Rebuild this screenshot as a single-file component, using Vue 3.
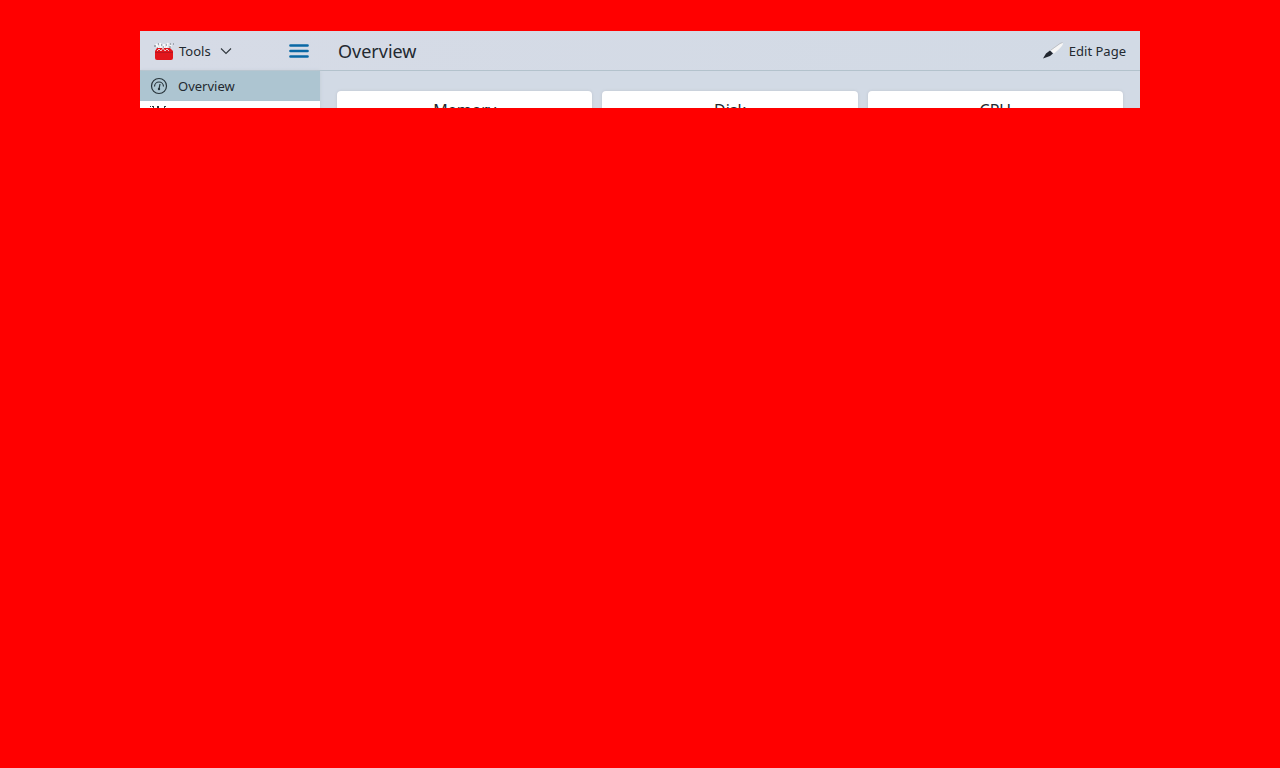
<script setup>
const cards = ['Memory', 'Disk', 'CPU']
</script>

<template>
  <div class="desktop">
    <div class="window">
      <header class="toolbar">
        <div class="side-tools">
          <button class="tool" type="button">
            <svg class="toolbox" width="20" height="20" viewBox="0 0 20 20" aria-hidden="true">
              <path d="M2 3l3 5M6 2l1 6M10 3v5M14 2l-2 6M17 4l-2 4" stroke="#f7f8f9" stroke-width="2" />
              <path d="M0 5h2M4 3h1M7 4h1M12 4h1M16 3h1M15 6h2M19 3h1M3 7h1M9 6h1" stroke="#6b7078" stroke-width="1" />
              <path d="M1 10l2-3h13l3 3v7q0 2-2 2H3q-2 0-2-2z" fill="#e2161c" />
              <path d="M1 11.500h18" stroke="#bd1620" />
              <path d="M3 10l2-2 2 2 2-3 2 3 2-2 2 2" fill="none" stroke="#eccbd0" stroke-width="1" />
            </svg>
            <span>Tools</span>
            <svg class="chevron" width="12" height="12" viewBox="0 0 12 12" aria-hidden="true">
              <path d="M1 3.500L6 8.500L11 3.500" fill="none" stroke="#30373d" stroke-width="1.100" />
            </svg>
          </button>
          <button class="menu" type="button" aria-label="Menu">
            <svg width="20" height="16" viewBox="0 0 20 16" aria-hidden="true">
              <path d="M1.500 2.500h17M1.500 8h17M1.500 13.500h17" stroke="#0968a5" stroke-width="2.700" stroke-linecap="round" />
            </svg>
          </button>
        </div>
        <h1>Overview</h1>
        <button class="tool edit" type="button">
          <svg width="22" height="20" viewBox="0 0 22 20" aria-hidden="true">
            <path d="M8.500 9.500L18 3Q21 1 21 3Q20 6 12 12.500z" fill="#f6f6f6" />
            <path d="M9 9L18 2.500L20.500 1.500" fill="none" stroke="#b3b3b6" stroke-width="0.700" />
            <path d="M1 17.500L4 12.500L8 9.500L11 12.500L8 15z" fill="#20252e" />
          </svg>
          <span>Edit Page</span>
        </button>
      </header>
      <div class="body">
        <nav class="sidebar">
          <a class="item active" href="#overview">
            <svg width="18" height="18" viewBox="0 0 18 18" fill="none" stroke="#28343b" aria-hidden="true">
              <circle cx="9" cy="9" r="7.500" stroke-width="1.200" />
              <path d="M4.500 9.500A4.500 4.500 0 0 1 13.500 9.500" stroke-width="1.200" />
              <path d="M10 7L9 12" stroke-width="1.200" />
              <circle cx="9" cy="12" r="1.200" fill="#28343b" stroke="none" />
            </svg>
            <span>Overview</span>
          </a>
          <a class="item" href="#applications" aria-label="Next page">
            <svg width="18" height="22" viewBox="0 0 18 22" fill="none" stroke="#30373d" aria-hidden="true">
              <path d="M0 1.500h1M2 1.500h2M7 1.500h2M14 1.500h2" />
              <path d="M3.500 2v16M6.500 3v14M9.500 3v14M14.500 2v16M17.500 3v14" />
              <path d="M8 2v1" stroke-width="2" />
            </svg>
          </a>
        </nav>
        <main>
          <section v-for="title in cards" :key="title" class="card">
            <h2>{{ title }}</h2>
          </section>
        </main>
      </div>
    </div>
  </div>
</template>

<style>
body {
  background: #ff0000;
}
</style>

<style scoped>
.desktop {
  padding: 31px 140px;
  font-family: "Noto Sans", sans-serif;
  font-size: 13px;
  color: #232930;
}
.window {
  max-height: 77px;
  overflow: hidden;
  background: #d2dae5;
}
.toolbar {
  display: flex;
  align-items: center;
  height: 39px;
  border-bottom: 1px solid #b3c2cc;
  background: linear-gradient(90deg, #d6dbe6, #d2dae5);
}
.side-tools {
  box-sizing: border-box;
  display: flex;
  justify-content: space-between;
  align-items: center;
  width: 180px;
  padding: 0 11px 0 14px;
}
button {
  display: flex;
  align-items: center;
  padding: 0;
  border: 0;
  background: none;
  color: inherit;
  font: inherit;
}
.tool {
  gap: 5px;
  line-height: 20px;
}
.chevron {
  margin-left: 4px;
}
h1 {
  flex: 1;
  margin: 0;
  padding-left: 18px;
  font-size: 18px;
  font-weight: 400;
  line-height: 24px;
}
.edit {
  padding-right: 14px;
}
.body {
  display: flex;
}
.sidebar {
  width: 180px;
  background: #ffffff;
  box-shadow: 0 0 4px #c3cbd6;
}
.item {
  display: flex;
  align-items: center;
  gap: 10px;
  height: 30px;
  padding-left: 10px;
  color: inherit;
  text-decoration: none;
}
.active {
  background: #adc5d1;
}
main {
  flex: 1;
  display: grid;
  grid-template-columns: repeat(3, 1fr);
  gap: 10px;
  padding: 20px 17px;
}
.card {
  min-height: 180px;
  border-radius: 4px;
  background: #ffffff;
  box-shadow: 0 0 3px #bcc3cc;
}
h2 {
  margin: 0;
  padding-top: 8px;
  font-size: 16px;
  font-weight: 400;
  line-height: 22px;
  text-align: center;
}
</style>
